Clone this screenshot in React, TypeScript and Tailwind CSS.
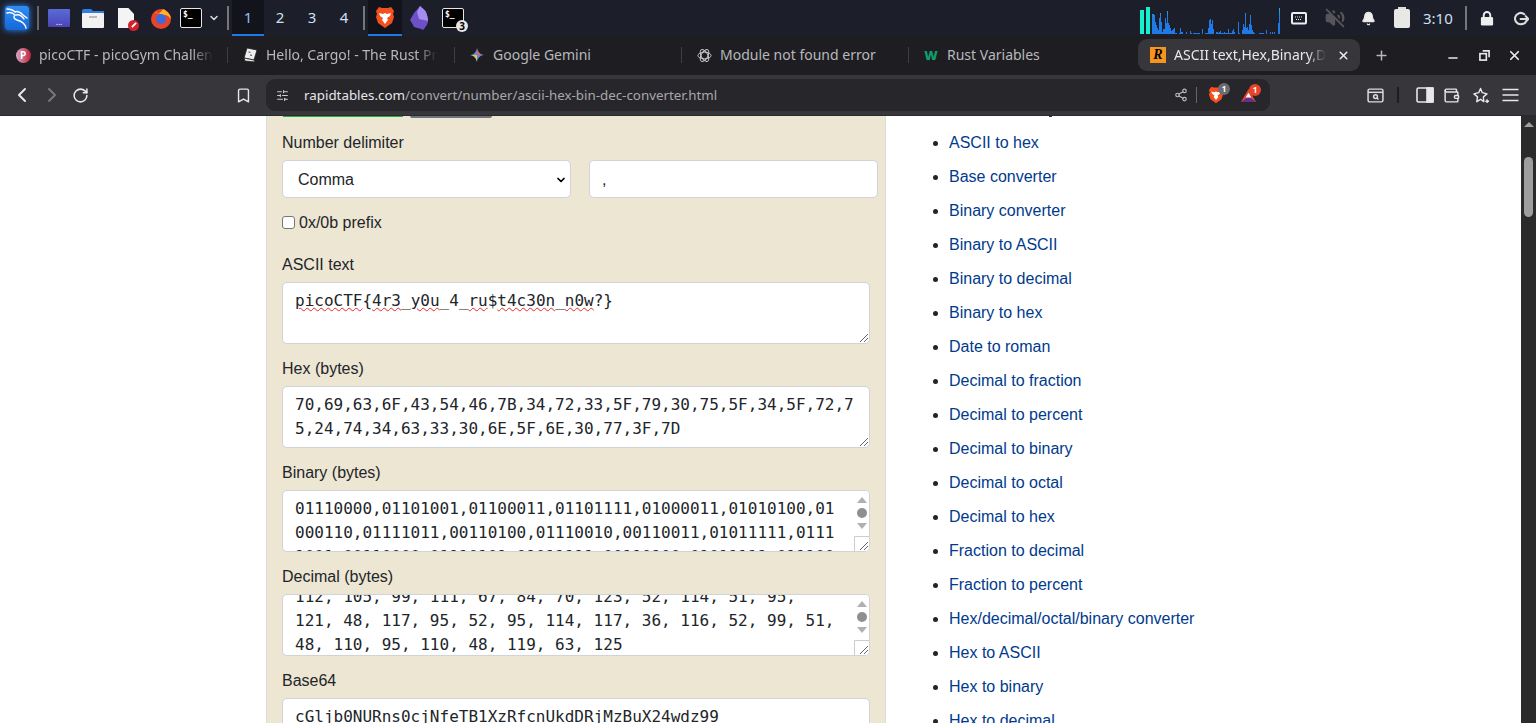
import { ChevronDown, ChevronLeft, ChevronRight, RotateCw, Bookmark, SlidersHorizontal, Share2, X, Plus, Minus, Wallet, Bell, VolumeOff } from "lucide-react";

const mono = "font-['DejaVu_Sans_Mono',monospace]";

const links = [
  "ASCII to hex",
  "Base converter",
  "Binary converter",
  "Binary to ASCII",
  "Binary to decimal",
  "Binary to hex",
  "Date to roman",
  "Decimal to fraction",
  "Decimal to percent",
  "Decimal to binary",
  "Decimal to octal",
  "Decimal to hex",
  "Fraction to decimal",
  "Fraction to percent",
  "Hex/decimal/octal/binary converter",
  "Hex to ASCII",
  "Hex to binary",
  "Hex to decimal",
];

// one column per pixel, read off the panel graph
const netBars = [
  20, 20, 19, 12, 9, 6, 4, 16, 21, 12, 2, 5, 5, 16, 11, 23, 11, 9, 6, 3, 4, 5, 6, 1, 1, 0, 0, 1, 6, 2, 2, 0, 0, 0, 2, 0, 0, 0, 3, 1,
  0, 1, 1, 1, 1, 1, 1, 1, 0, 0, 5, 0, 0, 1, 1, 1, 6, 14, 15, 10, 14, 5, 0, 0, 2, 2, 1, 2, 3, 1, 1, 1, 2, 1, 1, 1, 5, 1, 1, 1,
  3, 5, 2, 0, 0, 0, 12, 1, 0, 0, 4, 10, 7, 21, 6, 7, 4, 10, 19, 9, 4, 2, 1, 0, 0, 0, 0, 1, 1, 1, 1, 1, 0, 0, 4, 0, 0, 0, 2, 0,
  2, 0, 2, 0, 0, 0, 11, 26,
];

function KaliIcon() {
  return (
    <div className="h-6 w-6 rounded-[3px] bg-gradient-to-b from-[#2f8df5] to-[#1567d8] shadow-[0_0_6px_#2b8cff]">
      <svg viewBox="0 0 24 24" className="h-6 w-6" fill="none" stroke="#fff" strokeWidth="1.400" strokeLinecap="round">
        <path d="M2 3c3 0 6 1 8 3 2-1 5 0 8 3l4 3M2 7c3-1 6 0 8 2-2 2-1 4 2 5 4 1 8 3 9 8" />
        <path d="M11 9c3-1 6 1 8 4" />
      </svg>
    </div>
  );
}

function TerminalIcon({ badge }: { badge?: boolean }) {
  return (
    <div className="relative h-[20px] w-[22px] rounded-[2px] border border-[#e6e6e6] bg-black">
      <span className={`${mono} absolute left-[2px] top-[1px] text-[8px] font-bold leading-[10px] text-white`}>$_</span>
      {badge && (
        <span className="absolute -bottom-[5px] -right-[5px] flex h-[12px] w-[12px] items-center justify-center rounded-full bg-[#e6e6e6] text-[10px] font-bold leading-none text-black">
          3
        </span>
      )}
    </div>
  );
}

function BraveLion({ w = 20, h = 23 }: { w?: number; h?: number }) {
  return (
    <svg viewBox="0 0 20 23" width={w} height={h}>
      <path d="M1 5l3-4 3 1h6l3-1 3 4-1 3 1 3-2 6-7 5-7-5-2-6 1-3z" fill="#f4501f" />
      <path d="M4 7l4 1 2-1 2 1 4-1-1 3-3 2 1 2-3 4-3-4 1-2-3-2z" fill="#fff" />
    </svg>
  );
}

function TopBar() {
  return (
    <div className="flex h-9 shrink-0 items-center bg-[#1c1e29] font-['Noto_Sans',sans-serif] text-[#e6e6e6]">
      <div className="ml-[5px]"><KaliIcon /></div>
      <div className="ml-[8px] h-6 w-[2px] bg-[#666]" />
      <div className="ml-[9px] flex h-[18px] w-[22px] items-end justify-center rounded-[1px] bg-gradient-to-b from-[#5a6bd8] to-[#4a44b8] pb-[2px] text-[8px] leading-[6px] text-white">...</div>
      <svg viewBox="0 0 22 20" className="ml-[12px] h-[20px] w-[22px]">
        <path d="M0 3a2 2 0 012-2h7l2 2h11v4H0z" fill="#2f7fe0" />
        <rect y="5" width="22" height="15" rx="1" fill="#f2f2f2" />
        <rect x="7" y="8" width="8" height="2" fill="#bbb" />
      </svg>
      <div className="relative ml-[14px] h-[20px] w-[16px] bg-[#f4f4f4] [clip-path:polygon(0_0,65%_0,100%_30%,100%_100%,0_100%)]" />
      <div className="relative -ml-[1px] mt-[14px] flex h-[11px] w-[11px] -translate-x-[5px] items-center justify-center rounded-full bg-[#d3202a]">
        <div className="h-[2px] w-[6px] -rotate-45 bg-white" />
      </div>
      <svg viewBox="0 0 22 22" className="ml-[6px] h-[22px] w-[22px]">
        <circle cx="11" cy="12" r="10" fill="#e8442a" />
        <path d="M5 5c2 3 6 1 8-3 4 2 8 6 8 10-3-4-5-4-8-4z" fill="#ffb32c" />
        <circle cx="11" cy="12" r="5" fill="#3a6be0" />
      </svg>
      <div className="ml-[8px]"><TerminalIcon /></div>
      <ChevronDown size={12} strokeWidth={3} className="ml-[6px] text-[#ddd]" />
      <div className="ml-[7px] h-6 w-[2px] bg-[#777]" />
      <div className="ml-[3px] flex h-9 text-[15px] text-[#cfe0f5]">
        {["1", "2", "3", "4"].map((n) => (
          <div
            key={n}
            className={`flex h-9 w-8 items-center justify-center border-b-[2px] ${n === "1" ? "border-[#1f7ae8] bg-[#13141b] text-[#8fc0f5]" : "border-transparent"}`}
          >
            {n}
          </div>
        ))}
      </div>
      <div className="ml-[3px] h-6 w-[2px] bg-[#777]" />
      <div className="ml-[3px] flex h-9 w-[34px] items-center justify-center border-b-[2px] border-[#1f7ae8] bg-[#13141b]">
        <BraveLion />
      </div>
      <svg viewBox="0 0 18 24" className="ml-[8px] h-[24px] w-[18px]">
        <path d="M10 0c2 2 5 4 6 6 1 3 2 6 2 9 0 3-3 7-5 9-3-2-7-2-9-3-1-3-3-5-4-7l4-7z" fill="#6d4fc8" />
        <path d="M10 0c2 2 5 4 6 6 1 3 2 6 2 9L9 13 7 6z" fill="#a78cf0" />
      </svg>
      <div className="relative ml-[14px]"><TerminalIcon badge /></div>
      <div className="ml-[676px] flex h-[34px] w-[140px] shrink-0 items-end self-start">
        <div className="h-[24px] w-[4px] shrink-0 bg-[#15f0d0]" />
        <div className="ml-[2px] h-[27px] w-[4px] shrink-0 bg-[#15f0d0]" />
        <div className="ml-[2px] flex h-[27px] w-[128px] shrink-0 items-end">
          {netBars.map((h, i) => (
            <div
              key={i}
              className="w-px shrink-0 bg-[linear-gradient(to_top,#1f7ae8_60%,#22b8d8)] bg-[length:100%_27px] bg-bottom"
              style={{ height: h }}
            />
          ))}
        </div>
      </div>
      <svg viewBox="0 0 16 13" className="ml-[11px] h-[13px] w-[16px]" fill="none" stroke="#eee" strokeWidth="2">
        <rect x="1" y="1" width="14" height="10.500" rx="1" />
        <path d="M4 5h8M5 7.500h6" strokeWidth="1.200" strokeDasharray="1 1" />
      </svg>
      <VolumeOff size={20} fill="#55555a" strokeWidth={2.4} className="ml-[18px] text-[#55555a]" />
      <Bell size={15} fill="#eee" className="ml-[16px]" />
      <div className="ml-[18px] mt-[-1px] flex w-[16px] flex-col items-center">
        <div className="h-[2px] w-[8px] bg-[#ddd]" />
        <div className="h-[19px] w-[16px] rounded-[2px] bg-[#e8e8e4]" />
      </div>
      <span className="ml-[13px] text-[15px] text-[#cfe0f5]">3:10</span>
      <div className="ml-[12px] h-6 w-[2px] bg-[#777]" />
      <svg viewBox="0 0 14 16" className="ml-[13px] h-[15px] w-[14px]">
        <path d="M3.500 7V4.500a3.500 3.500 0 017 0V7" fill="none" stroke="#eee" strokeWidth="2" />
        <rect x="0.500" y="6.500" width="13" height="9" rx="1.500" fill="#eee" />
      </svg>
      <svg viewBox="0 0 16 16" className="ml-[20px] h-[15px] w-[15px]" fill="none" stroke="#ddd" strokeWidth="2.200" strokeLinecap="round">
        <path d="M11 3.500A6 6 0 108 14a6 6 0 004-1.500" />
        <path d="M7 8.500h8M12.500 5.500l2.800 3-2.800 3" />
      </svg>
    </div>
  );
}

function Tab({ title, icon, fade }: { title: string; icon: React.ReactNode; fade?: boolean }) {
  return (
    <div className="flex h-[22px] w-[227px] items-center pl-[7px] pr-[7px]">
      <div className="flex h-[16px] w-[16px] shrink-0 items-center justify-center">{icon}</div>
      <div className="ml-2 min-w-0 flex-1">
        <span className={`inline-block -translate-y-px whitespace-nowrap text-[14px] text-[#b8b8bc] ${fade ? "[mask-image:linear-gradient(to_right,black_88%,transparent)]" : ""}`}>
          {title}
        </span>
      </div>
      <div className="h-4 w-px bg-[#3d3d42]" />
    </div>
  );
}

function TabBar() {
  return (
    <div className="flex h-[39px] shrink-0 items-center bg-[#1e1e22] pb-[1px] pl-2 font-['Noto_Sans',sans-serif]">
      <Tab
        fade
        title="picoCTF - picoGym Challen"
        icon={<div className="flex h-[15px] w-[15px] items-center justify-center rounded-full bg-[linear-gradient(to_right,#d8a8c0,#c0203c)] text-[10px] font-bold leading-none text-white">P</div>}
      />
      <Tab
        fade
        title="Hello, Cargo! - The Rust Pr"
        icon={
          <svg viewBox="0 0 16 16" className="h-[16px] w-[16px]" fill="#eee" stroke="#1e1e22" strokeWidth="0.800">
            <path d="M5 1l10 2-3 10-10-2z" />
            <path d="M2 11l10 2 1 2-10-1z" />
            <path d="M6.500 5l2 .4M8 8l2 .4" />
          </svg>
        }
      />
      <Tab
        title="Google Gemini"
        icon={
          <svg viewBox="0 0 16 16" className="h-[14px] w-[14px]">
            <path d="M8 0c.6 4 3 7.400 8 8-5 .6-7.400 4-8 8-.6-4-3-7.400-8-8 5-.6 7.400-4 8-8z" fill="#4a8cf0" />
            <path d="M8 0c.6 4 3 7.400 8 8H8z" fill="#e8635a" />
            <path d="M8 16c-.6-4-3-7.400-8-8h8z" fill="#f5c33b" />
          </svg>
        }
      />
      <Tab
        title="Module not found error"
        icon={
          <svg viewBox="0 0 16 16" className="h-[15px] w-[15px]" fill="none" stroke="#ccc" strokeWidth="1">
            <ellipse cx="8" cy="8" rx="7" ry="3.500" />
            <ellipse cx="8" cy="8" rx="7" ry="3.500" transform="rotate(60 8 8)" />
            <ellipse cx="8" cy="8" rx="7" ry="3.500" transform="rotate(120 8 8)" />
          </svg>
        }
      />
      <div className="flex h-[22px] w-[222px] items-center pl-[7px]">
        <span className="flex w-[16px] justify-center text-[13px] font-black leading-none text-[#0f9d6c]">W</span>
        <span className="ml-2 -translate-y-px text-[14px] text-[#b8b8bc]">Rust Variables</span>
      </div>
      <div className="flex h-[32px] w-[222px] items-center rounded-[9px] bg-[#36363b] pl-[12px] pr-[10px]">
        <div className="flex h-[16px] w-[16px] shrink-0 items-center justify-center bg-[#f7941d] font-['Liberation_Serif',serif] text-[14px] font-bold italic leading-none text-black">R</div>
        <div className="ml-[8px] min-w-0 flex-1">
          <span className="inline-block -translate-y-px whitespace-nowrap text-[14px] text-[#e8e8ea] [mask-image:linear-gradient(to_right,black_88%,transparent)]">ASCII text,Hex,Binary,D</span>
        </div>
        <X size={13} strokeWidth={3} className="ml-2 text-[#e8e8ea]" />
      </div>
      <Plus size={15} strokeWidth={2.400} className="ml-[14px] text-[#b8b8bc]" />
      <Minus size={14} strokeWidth={2.600} className="ml-[57px] mt-[6px] text-[#e8e8ea]" />
      <svg viewBox="0 0 12 12" className="ml-[19px] h-[11px] w-[11px]" fill="none" stroke="#e8e8ea" strokeWidth="1.800">
        <rect x="1" y="4" width="7" height="7" />
        <path d="M4 1h7v7" />
      </svg>
      <X size={15} strokeWidth={2.800} className="ml-[17px] text-[#e8e8ea]" />
    </div>
  );
}

function AddressBar() {
  return (
    <div className="flex h-[40px] shrink-0 items-center bg-[#36363b] font-['Noto_Sans',sans-serif] text-[#e8e8ea]">
      <ChevronLeft size={24} strokeWidth={2} className="ml-[10px]" />
      <ChevronRight size={24} strokeWidth={2} className="ml-[6px] text-[#77777c]" />
      <RotateCw size={17} strokeWidth={2.200} className="ml-[8px]" />
      <Bookmark size={17} strokeWidth={2} className="ml-[146px]" />
      <div className="ml-[14px] flex h-8 w-[1004px] items-center rounded-[9px] bg-[#26262b] pl-[10px] pr-[13px]">
        <SlidersHorizontal size={13} className="text-[#ccc]" />
        <span className="ml-[15px] flex-1 text-[13.350px]">
          <span className="text-[#e6e6e8]">rapidtables.com</span>
          <span className="text-[#a8a8ac]">/convert/number/ascii-hex-bin-dec-converter.html</span>
        </span>
        <Share2 size={14} className="text-[#bbb]" />
        <div className="ml-[8px] h-4 w-px bg-[#666]" />
        <div className="relative ml-[11px]">
          <BraveLion w={16} h={18} />
          <span className="absolute -right-[6px] -top-[3px] flex h-[12px] w-[12px] items-center justify-center rounded-full bg-[#6b6b72] text-[8px] font-bold leading-none text-white">1</span>
        </div>
        <div className="relative ml-[16px]">
          <svg viewBox="0 0 18 16" className="h-[15px] w-[17px]">
            <path d="M9 1l8 14H1z" fill="#e8442a" />
            <path d="M1 15l8-6 8 6z" fill="#662d91" />
            <path d="M9 5l3 5H6z" fill="#fff" />
          </svg>
          <span className="absolute -right-[4px] -top-[4px] flex h-[12px] w-[12px] items-center justify-center rounded-full bg-[#e8442a] text-[8px] font-bold leading-none text-white">1</span>
        </div>
      </div>
      <svg viewBox="0 0 16 14" className="ml-[97px] h-[15px] w-[17px]" fill="none" stroke="#ddd" strokeWidth="1.400">
        <rect x="1" y="1" width="14" height="12" rx="1.500" />
        <path d="M1 4h14" />
        <circle cx="8" cy="8" r="1.800" />
        <path d="M9.300 9.300l1.500 1.500" />
      </svg>
      <div className="ml-[13px] h-4 w-[2px] bg-[#1e1e22]" />
      <svg viewBox="0 0 18 16" className="ml-[17px] h-[16px] w-[18px]" fill="none" stroke="#e8e8ea" strokeWidth="1.600">
        <rect x="1" y="1" width="16" height="14" rx="1.500" />
        <rect x="11" y="1" width="6" height="14" fill="#e8e8ea" />
      </svg>
      <Wallet size={17} strokeWidth={2} className="ml-[9px]" />
      <svg viewBox="0 0 18 18" className="ml-[13px] h-[17px] w-[17px]" fill="none" stroke="#e8e8ea" strokeWidth="1.500" strokeLinejoin="round">
        <path d="M8 1.500l1.800 4.500 5 1.300-3.800 3.200.4 5L8 13l-4 2.500.8-5L1 7.300l5-1.300z" />
        <path d="M15 13v4M13 15h4" />
      </svg>
      <svg viewBox="0 0 16 14" className="ml-[12px] h-[14px] w-[17px]" stroke="#e8e8ea" strokeWidth="1.700">
        <path d="M0 1.500h16M0 7h16M0 12.500h16" />
      </svg>
    </div>
  );
}

function Scrollbox({ children, scroll, offset = 0 }: { children: React.ReactNode; scroll?: boolean; offset?: number }) {
  return (
    <div className={`relative h-[62px] overflow-hidden rounded-[5px] border border-[#ced4da] bg-white px-3 py-[6px] ${mono} text-[16px] leading-6 text-[#212529]`}>
      <div style={{ marginTop: offset }} className={scroll ? "mr-[18px] break-all" : "break-all"}>{children}</div>
      {scroll && (
        <div className="absolute bottom-0 right-0 top-0 flex w-[15px] flex-col items-center bg-white pt-[6px]">
          <div className="h-0 w-0 border-x-[5px] border-b-[6px] border-x-transparent border-b-[#b0b0b0]" />
          <div className="mt-[5px] h-[10px] w-[10px] rounded-full bg-[#8f8f8f]" />
          <div className="mt-[5px] h-0 w-0 border-x-[5px] border-t-[6px] border-x-transparent border-t-[#b0b0b0]" />
        </div>
      )}
      <svg viewBox="0 0 15 15" className="absolute bottom-0 right-0 h-[15px] w-[15px]">
        {scroll && <path d="M0.500 15V0.500H15" fill="#fff" stroke="#ccc" />}
        <path d="M6 14l8-8M10 14l4-4" stroke="#666" strokeWidth="1" />
      </svg>
    </div>
  );
}

function Field({ label, children }: { label: string; children: React.ReactNode }) {
  return (
    <div className="mb-[13px]">
      <div className="mb-[5px] h-6 text-[16px] leading-6 text-[#212529]">{label}</div>
      {children}
    </div>
  );
}

function Squiggle({ children }: { children: React.ReactNode }) {
  return <span className="underline decoration-[#e8262a] decoration-wavy decoration-1 underline-offset-1">{children}</span>;
}

function ConverterPanel() {
  return (
    <div className="ml-[266px] w-[620px] shrink-0 border-x border-[#dcdcdc] bg-[#ede6d3] pl-[15px] pr-[7px] font-['Liberation_Sans',sans-serif]">
      <div className="flex h-[2px] items-start gap-[7px] pl-px">
        <div className="h-px w-[120px] bg-[#28a745]" />
        <div className="h-[2px] w-[82px] rounded-b bg-[#6c757d]" />
      </div>
      <div className="mt-[13px] h-6 text-[16px] leading-6 text-[#212529]">Number delimiter</div>
      <div className="mt-[5px] flex gap-[18px]">
        <div className="flex h-[38px] w-[289px] items-center justify-between rounded-[5px] border border-[#ced4da] bg-white pl-[15px] pr-[3px] pt-px text-[16px] text-[#212529]">
          Comma
          <ChevronDown size={12} strokeWidth={3.500} className="text-black" />
        </div>
        <div className="flex h-[38px] w-[289px] items-center rounded-[5px] border border-[#ced4da] bg-white pl-3 pt-px text-[16px] text-[#212529]">,</div>
      </div>
      <div className="mt-[13px] flex h-6 items-center text-[16px] text-[#212529]">
        <div className="-mt-[2px] h-[13px] w-[13px] rounded-[3px] border border-[#767676] bg-white" />
        <span className="ml-1">0x/0b prefix</span>
      </div>
      <div className="mt-[18px] w-[588px]">
        <Field label="ASCII text">
          <Scrollbox>
            <Squiggle>picoCTF</Squiggle>{"{"}<Squiggle>4r3</Squiggle>_<Squiggle>y0u</Squiggle>_4_<Squiggle>ru</Squiggle>$<Squiggle>t4c30n</Squiggle>_<Squiggle>n0w</Squiggle>?{"}"}
          </Scrollbox>
        </Field>
        <Field label="Hex (bytes)">
          <Scrollbox>70,69,63,6F,43,54,46,7B,34,72,33,5F,79,30,75,5F,34,5F,72,75,24,74,34,63,33,30,6E,5F,6E,30,77,3F,7D</Scrollbox>
        </Field>
        <Field label="Binary (bytes)">
          <Scrollbox scroll>01110000,01101001,01100011,01101111,01000011,01010100,01000110,01111011,00110100,01110010,00110011,01011111,01111001,00110000,01110101,01011111,00110100,01011111,01110010,01110101</Scrollbox>
        </Field>
        <Field label="Decimal (bytes)">
          <Scrollbox scroll offset={-16}>
            112, 105, 99, 111, 67, 84, 70, 123, 52, 114, 51, 95,<br />
            121, 48, 117, 95, 52, 95, 114, 117, 36, 116, 52, 99, 51,<br />
            48, 110, 95, 110, 48, 119, 63, 125
          </Scrollbox>
        </Field>
        <Field label="Base64">
          <Scrollbox>cGljb0NURns0cjNfeTB1XzRfcnUkdDRjMzBuX24wdz99</Scrollbox>
        </Field>
      </div>
    </div>
  );
}

function RelatedList() {
  return (
    <div className="ml-[47px] flex-1 font-['Liberation_Sans',sans-serif]">
      <div className="ml-[116px] h-px w-[3px] bg-[#003a8c]" />
      <ul className="mt-[10px] list-disc pl-[16px] text-[16px] text-[#003a8c] marker:text-[#212529]">
        {links.map((l) => (
          <li key={l} className="h-[34px] leading-[32px]">{l}</li>
        ))}
      </ul>
    </div>
  );
}

function PageScrollbar() {
  return (
    <div className="flex w-[15px] shrink-0 flex-col items-center bg-[#2b2b2b] pt-[6px]">
      <div className="h-0 w-0 border-x-[5px] border-b-[5px] border-x-transparent border-b-[#a0a0a0]" />
      <div className="mt-[30px] h-[60px] w-[9px] rounded-full bg-[#9e9e9e]" />
    </div>
  );
}

export default function App() {
  return (
    <div className="flex h-[723px] w-[1536px] flex-col overflow-hidden bg-white">
      <TopBar />
      <TabBar />
      <AddressBar />
      <div className="h-px shrink-0 bg-[#2b2b2e]" />
      <div className="flex min-h-0 flex-1 overflow-hidden">
        <ConverterPanel />
        <RelatedList />
        <PageScrollbar />
      </div>
    </div>
  );
}
